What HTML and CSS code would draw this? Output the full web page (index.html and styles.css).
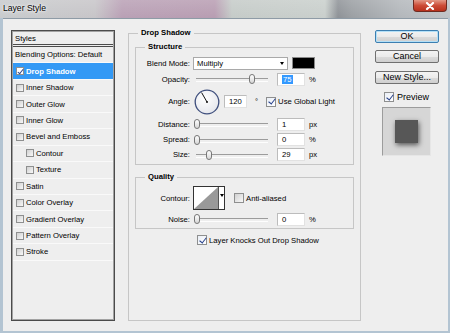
FILE: index.html
```html
<!DOCTYPE html>
<html lang="en">
<head>
  <meta charset="UTF-8" />
  <title>Layer Style</title>
  <link rel="stylesheet" href="styles.css">
</head>
<body>
  <div class="window">
    <div class="titlebar">
      <span class="title">Layer Style</span>
      <span class="close">
        <svg width="10" height="8" viewBox="0 0 10 8"><path d="M2 1 L8 7 M8 1 L2 7" stroke="#fff" stroke-width="2.2" stroke-linecap="round"/></svg>
      </span>
    </div>
    <div class="frame">
      <div class="client">

        <div class="styles-list">
          <div class="list-head">Styles</div>
          <div class="list-row">Blending Options: Default</div>
          <div class="list-row selected"><span class="cb on"></span>Drop Shadow</div>
          <div class="list-row"><span class="cb"></span>Inner Shadow</div>
          <div class="list-row"><span class="cb"></span>Outer Glow</div>
          <div class="list-row"><span class="cb"></span>Inner Glow</div>
          <div class="list-row"><span class="cb"></span>Bevel and Emboss</div>
          <div class="list-row sub-row"><span class="cb"></span>Contour</div>
          <div class="list-row sub-row"><span class="cb"></span>Texture</div>
          <div class="list-row"><span class="cb"></span>Satin</div>
          <div class="list-row"><span class="cb"></span>Color Overlay</div>
          <div class="list-row"><span class="cb"></span>Gradient Overlay</div>
          <div class="list-row"><span class="cb"></span>Pattern Overlay</div>
          <div class="list-row"><span class="cb"></span>Stroke</div>
        </div>

        <fieldset class="group main">
          <legend>Drop Shadow</legend>

          <fieldset class="group sub structure">
            <legend>Structure</legend>
            <div class="row h16">
              <span class="lbl">Blend Mode:</span>
              <div class="ctrl">
                <div class="select">Multiply<span class="arrow"></span></div>
                <span class="swatch"></span>
              </div>
            </div>
            <div class="row h16">
              <span class="lbl">Opacity:</span>
              <div class="ctrl">
                <div class="slider"><span class="thumb" style="left:59px"></span></div>
                <span class="num"><span class="sel">75</span></span>
                <span class="unit">%</span>
              </div>
            </div>
            <div class="row h29">
              <span class="lbl">Angle:</span>
              <div class="ctrl">
                <svg class="dial" width="26" height="26" viewBox="0 0 26 26">
                  <defs>
                    <radialGradient id="dialfill" cx="40%" cy="35%" r="70%">
                      <stop offset="0" stop-color="#ffffff"/>
                      <stop offset="1" stop-color="#e4e6ec"/>
                    </radialGradient>
                  </defs>
                  <circle cx="13" cy="13" r="11.8" fill="url(#dialfill)" stroke="#3f4f7d" stroke-width="1.3"/>
                  <line x1="13" y1="13" x2="7.6" y2="3.6" stroke="#111" stroke-width="1"/>
                  <circle cx="13" cy="13" r="1" fill="#111"/>
                </svg>
                <span class="num angle">120</span>
                <span class="deg">°</span>
                <span class="cb on global"></span>
                <span class="cb-text">Use Global Light</span>
              </div>
            </div>
            <div class="row h16">
              <span class="lbl">Distance:</span>
              <div class="ctrl">
                <div class="slider"><span class="thumb" style="left:4px"></span></div>
                <span class="num">1</span>
                <span class="unit">px</span>
              </div>
            </div>
            <div class="row h15">
              <span class="lbl">Spread:</span>
              <div class="ctrl">
                <div class="slider"><span class="thumb" style="left:4px"></span></div>
                <span class="num">0</span>
                <span class="unit">%</span>
              </div>
            </div>
            <div class="row h15">
              <span class="lbl">Size:</span>
              <div class="ctrl">
                <div class="slider"><span class="thumb" style="left:16px"></span></div>
                <span class="num">29</span>
                <span class="unit">px</span>
              </div>
            </div>
          </fieldset>

          <fieldset class="group sub quality">
            <legend>Quality</legend>
            <div class="row h26">
              <span class="lbl">Contour:</span>
              <div class="ctrl">
                <div class="contour">
                  <svg class="curve" width="24" height="22" viewBox="0 0 24 22">
                    <rect width="24" height="22" fill="#fff"/>
                    <polygon points="0,22 24,0 24,22" fill="#999"/>
                  </svg>
                  <span class="contour-arrow"><span class="arrow"></span></span>
                </div>
                <span class="cb aa"></span>
                <span class="cb-text">Anti-aliased</span>
              </div>
            </div>
            <div class="row h16">
              <span class="lbl">Noise:</span>
              <div class="ctrl">
                <div class="slider"><span class="thumb" style="left:4px"></span></div>
                <span class="num">0</span>
                <span class="unit">%</span>
              </div>
            </div>
          </fieldset>

          <div class="knock"><span class="cb on"></span><span class="cb-text">Layer Knocks Out Drop Shadow</span></div>
        </fieldset>

        <div class="side">
          <button class="btn default">OK</button>
          <button class="btn">Cancel</button>
          <button class="btn btn-new">New Style...</button>
          <div class="preview-toggle"><span class="cb on"></span><span>Preview</span></div>
          <div class="preview-box"><div class="preview-square"></div></div>
        </div>

      </div>
    </div>
  </div>
</body>
</html>
```

FILE: styles.css
```css
* {
  box-sizing: border-box;
}

body {
  margin: 0;
  width: 450px;
  height: 333px;
  overflow: hidden;
  font-family: "Liberation Sans", Arial, sans-serif;
  font-size: 7.7px;
  color: #000;
  background: #9aa3aa;
}

.window {
  width: 450px;
  height: 333px;
  display: flex;
  flex-direction: column;
  background: #b3c4d2;
}

/* title bar (aero glass look) */
.titlebar {
  height: 18px;
  display: flex;
  align-items: flex-start;
  background:
    linear-gradient(rgba(255,255,255,0.15), rgba(255,255,255,0)),
    linear-gradient(90deg, #c8cbcd 0, #c7c5c8 95px, #b9a0b5 122px, #b89db2 215px, #c5cbc8 232px, #c9cfcc 325px, #8e9297 338px, #9b9fa3 352px, #b3b7bb 400px, #bfc3c7 450px);
}

.title {
  font-size: 8.6px;
  padding: 3px 0 0 3px;
  text-shadow: 0 0 4px #fff, 0 0 2px #fff;
}

.close {
  margin-left: auto;
  margin-right: 3px;
  width: 34px;
  height: 12px;
  display: flex;
  align-items: center;
  justify-content: center;
  background: linear-gradient(#e39886, #cc4c37 50%, #b8311d);
  border: 1px solid #6e2a20;
  border-top: 0;
  border-radius: 0 0 4px 4px;
}

.frame {
  flex: 1;
  padding: 0 2px 2px 3px;
}

.client {
  height: 100%;
  background: #eeeeee;
  border-top: 1px solid #8e9ba6;
  display: flex;
  align-items: flex-start;
  padding: 9px 0 0 8px;
}

/* left styles list */
.styles-list {
  width: 104px;
  height: 291px;
  margin-top: 2px;
  border: 1px solid #4b4b4b;
  box-shadow: inset 0 0 0 1px #a2a2a2;
  padding: 1px;
}

.list-head {
  height: 15px;
  line-height: 14px;
  padding-left: 2px;
  border-bottom: 3px double #4b4b4b;
}

.list-row {
  height: 16.45px;
  display: flex;
  align-items: center;
  padding-left: 3px;
  border-bottom: 1px solid #f9f9f9;
}

.list-row:nth-child(2) {
  padding-left: 2px;
}

.list-row .cb {
  width: 8px;
  height: 8px;
  margin-right: 2px;
}

.list-row.sub-row {
  padding-left: 13px;
}

.list-row.selected {
  background: #3399f5;
  color: #fff;
  font-weight: bold;
}

.list-row.selected .cb {
  background: #fff;
}

/* group boxes */
fieldset {
  margin: 0;
  padding: 0;
  min-width: 0;
  border: 1px solid #c6c6c6;
}

legend {
  padding: 0 3px;
  font-weight: bold;
  line-height: 10px;
}

.main {
  width: 233px;
  height: 293px;
  margin-left: 13px;
  padding: 2px 6px 0;
}

.main > legend {
  margin-left: 3px;
}

.sub > legend {
  margin-left: 9px;
}

.structure {
  margin-top: 2px;
  padding: 3px 0 2px;
}

.quality {
  margin-top: 7px;
  padding: 3px 0 1px;
}

.row {
  display: grid;
  grid-template-columns: 54px 1fr;
  column-gap: 3px;
  align-items: center;
}

.h15 { height: 15px; }
.h16 { height: 16px; }
.h26 { height: 26px; }
.h29 { height: 29px; }

.lbl {
  text-align: right;
}

.ctrl {
  display: flex;
  align-items: center;
}

.select {
  width: 95px;
  height: 13px;
  background: #fff;
  border: 1px solid #a9a9a9;
  padding: 0 3px;
  display: flex;
  align-items: center;
  justify-content: space-between;
}

.arrow {
  width: 0;
  height: 0;
  border-left: 2.5px solid transparent;
  border-right: 2.5px solid transparent;
  border-top: 3px solid #000;
}

.swatch {
  width: 23px;
  height: 12px;
  margin-left: 4px;
  background: #000;
  border: 1px solid #8a8a8a;
}

.slider {
  position: relative;
  width: 78px;
  height: 10px;
}

.slider::before {
  content: "";
  position: absolute;
  left: 3px;
  right: 3px;
  top: 4px;
  height: 2px;
  border-top: 1px solid #9c9c9c;
  border-bottom: 1px solid #fdfdfd;
}

.thumb {
  position: absolute;
  top: 0;
  width: 6px;
  height: 10px;
  margin-left: -3px;
  border: 1px solid #777;
  border-radius: 3px;
  background: linear-gradient(#fff, #d6d6d6);
}

.num {
  width: 28px;
  height: 13px;
  margin-left: 6px;
  padding-left: 4px;
  line-height: 11px;
  background: #fff;
  border: 1px solid;
  border-color: #bcbcbc #e2e2e2 #e2e2e2 #bcbcbc;
}

.num.angle {
  width: 23px;
  margin-left: 4px;
}

.sel {
  background: #3399ff;
  color: #fff;
  padding: 0 1px;
}

.unit {
  margin-left: 4px;
}

.dial {
  margin-left: 1px;
}

.deg {
  margin-left: 8px;
}

.cb {
  display: inline-block;
  flex-shrink: 0;
  position: relative;
  width: 10px;
  height: 10px;
  border: 1px solid #8e8f8f;
  background: linear-gradient(135deg, #d0d0d0, #f8f8f8);
}

.cb.on {
  background: linear-gradient(135deg, #e9eef6, #ffffff);
}

.cb.on::after {
  content: "";
  position: absolute;
  left: 2.6px;
  top: -0.5px;
  width: 2.6px;
  height: 6px;
  border: solid #27408b;
  border-width: 0 1.6px 1.6px 0;
  transform: rotate(38deg);
}

.list-row .cb.on::after {
  left: 2px;
  top: -0.5px;
  width: 2px;
  height: 5px;
}

.cb.global {
  margin-left: 8px;
}

.cb-text {
  margin-left: 2px;
}

.contour {
  width: 32px;
  height: 24px;
  border: 1px solid #333;
  display: flex;
  background: #fff;
}

.contour-arrow {
  flex: 1;
  border-left: 1px solid #555;
  display: flex;
  justify-content: center;
  padding-top: 7px;
}

.cb.aa {
  margin-left: 9px;
}

.knock {
  display: flex;
  align-items: center;
  height: 14px;
  margin-top: 4px;
  padding-left: 62px;
}

/* right column */
.side {
  width: 64px;
  margin-left: 14px;
  margin-top: 2px;
  display: flex;
  flex-direction: column;
}

.btn {
  height: 13px;
  padding: 0;
  font-family: "Liberation Sans", Arial, sans-serif;
  font-size: 9px;
  line-height: 11px;
  color: #000;
  border: 1px solid #707070;
  border-radius: 2px;
  background: linear-gradient(#f3f3f3 0, #ebebeb 50%, #dcdcdc 50%, #cfcfcf 100%);
}

.btn + .btn {
  margin-top: 7px;
}

.btn.btn-new {
  margin-top: 8px;
}

.btn.default {
  border-color: #3c7fb1;
  box-shadow: inset 0 0 0 1px #b4e0f7;
}

.preview-toggle {
  display: flex;
  align-items: center;
  height: 10px;
  margin-top: 8px;
  padding-left: 9px;
  font-size: 9px;
}

.preview-toggle span + span {
  margin-left: 3px;
}

.preview-box {
  width: 49px;
  height: 49px;
  margin: 5px 0 0 7px;
  background: #d6d6d6;
  border: 1px solid;
  border-color: #9c9c9c #e6e6e6 #e6e6e6 #9c9c9c;
  display: flex;
  align-items: center;
  justify-content: center;
}

.preview-square {
  width: 23px;
  height: 23px;
  background: #575757;
  box-shadow: 1px 2px 5px rgba(0, 0, 0, 0.6);
}
```
